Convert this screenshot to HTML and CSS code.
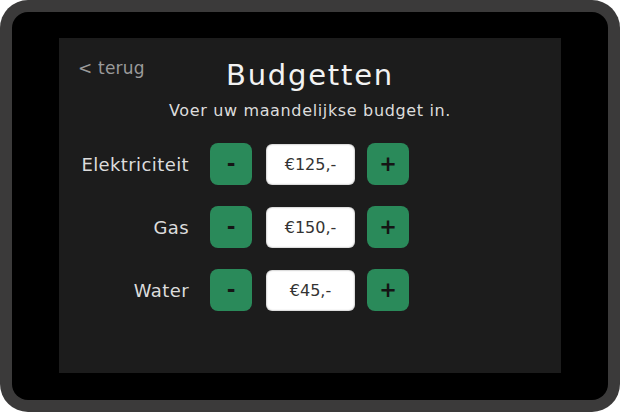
FILE: index.html
```html
<!DOCTYPE html>
<html lang="nl">
<head>
<meta charset="utf-8">
<title>Budgetten</title>
<link rel="stylesheet" href="styles.css">
</head>
<body>
<div class="device">
  <div class="bezel">
    <main class="screen">
      <header class="header">
        <a class="back" href="#">&lt; terug</a>
        <h1 class="title">Budgetten</h1>
        <span></span>
      </header>
      <p class="subtitle">Voer uw maandelijkse budget in.</p>
      <div class="form">
        <div class="row">
          <span class="label">Elektriciteit</span>
          <button class="step minus">-</button>
          <div class="value">€125,-</div>
          <button class="step plus">+</button>
        </div>
        <div class="row">
          <span class="label">Gas</span>
          <button class="step minus">-</button>
          <div class="value">€150,-</div>
          <button class="step plus">+</button>
        </div>
        <div class="row">
          <span class="label">Water</span>
          <button class="step minus">-</button>
          <div class="value">€45,-</div>
          <button class="step plus">+</button>
        </div>
      </div>
    </main>
  </div>
</div>
</body>
</html>
```

FILE: styles.css
```css
* { box-sizing: border-box; }
html, body { margin: 0; padding: 0; background: #ffffff; }
body { font-family: "DejaVu Sans", "Liberation Sans", sans-serif; }

.device {
  width: 620px;
  height: 412px;
  background: #3b3a3a;
  border-radius: 28px;
  padding: 12px;
}
.bezel {
  width: 100%;
  height: 100%;
  background: #000;
  border-radius: 16px;
  padding: 26px 47px 27px 47px;
}
.screen {
  width: 502px;
  height: 335px;
  background: #1c1c1c;
  display: flex;
  flex-direction: column;
}
.header {
  display: grid;
  grid-template-columns: 1fr auto 1fr;
  align-items: start;
  padding: 18px 19px 0 19px;
  height: 61px;
}
.back {
  color: #9a9a9a;
  text-decoration: none;
  font-size: 17px;
  line-height: 24px;
  letter-spacing: 0.2px;
}
.title {
  margin: 0;
  color: #f2f2f2;
  font-size: 29px;
  font-weight: 400;
  line-height: 38px;
  letter-spacing: 1.8px;
}
.subtitle {
  margin: 0;
  text-align: center;
  color: #dcdcdc;
  font-size: 16px;
  line-height: 24px;
  letter-spacing: 0.65px;
}
.form {
  display: flex;
  flex-direction: column;
  gap: 21px;
  padding: 20px 0 0 21px;
}
.row {
  display: flex;
  align-items: center;
  height: 42px;
}
.label {
  width: 109px;
  text-align: right;
  color: #dcdcdc;
  font-size: 18px;
  letter-spacing: 0.4px;
  margin-right: 21px;
}
.step {
  width: 42px;
  height: 42px;
  border: none;
  border-radius: 8px;
  background: #2a8a5a;
  color: #151515;
  font-family: "DejaVu Sans", sans-serif;
  font-size: 21px;
  font-weight: 700;
  padding: 0;
  display: flex;
  align-items: center;
  justify-content: center;
}
.value {
  width: 89px;
  height: 41px;
  margin: 0 12px 0 14px;
  background: #ffffff;
  border-radius: 6px;
  box-shadow: 0 0 2px rgba(0,0,0,0.5) inset;
  color: #333333;
  font-size: 16px;
  display: flex;
  align-items: center;
  justify-content: center;
}
```
